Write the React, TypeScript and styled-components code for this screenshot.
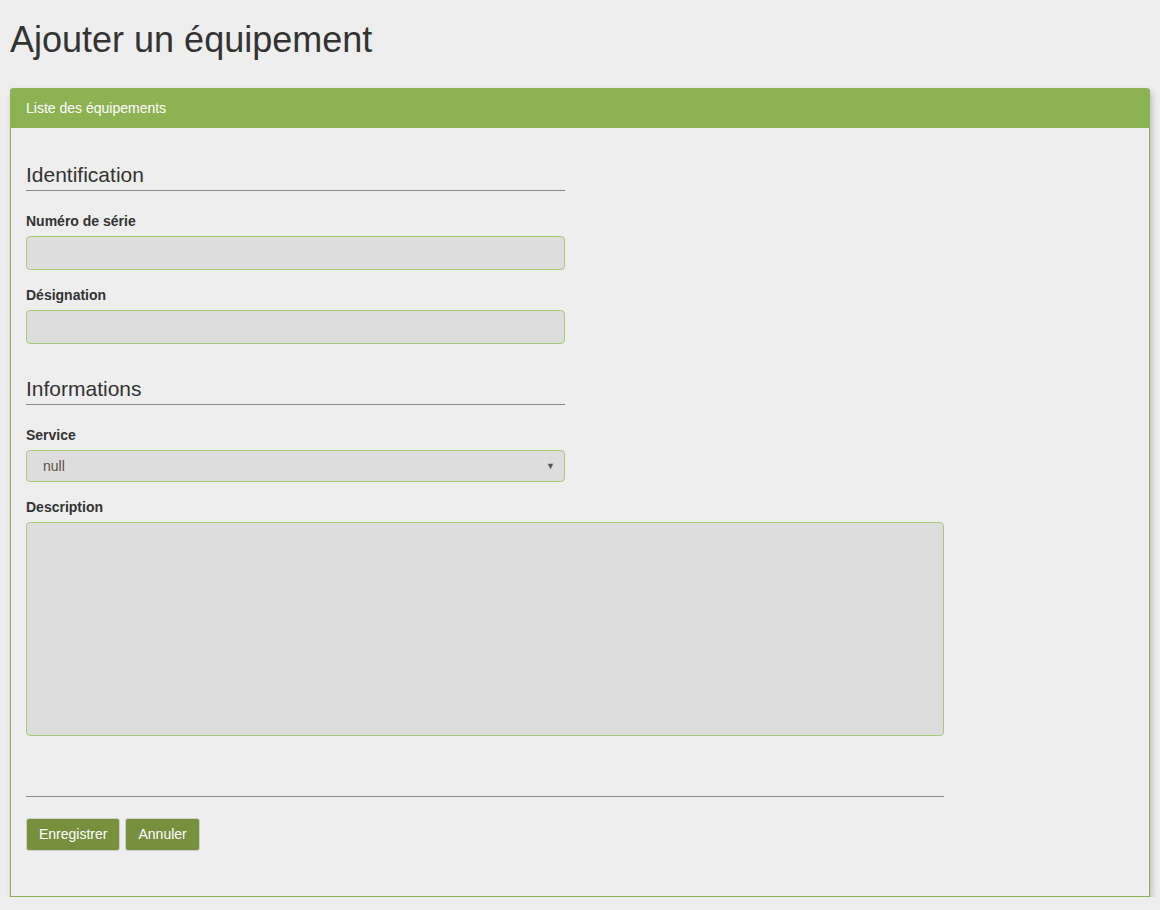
import { FC } from "react";
import styled, { createGlobalStyle } from "styled-components";

const GlobalStyle = createGlobalStyle`
  html, body {
    margin: 0;
    padding: 0;
    background: #eeeeee;
  }
  body {
    font-family: "Liberation Sans", Arial, Helvetica, sans-serif;
    font-size: 14px;
    line-height: 1.42857;
    color: #333333;
  }
  * {
    box-sizing: border-box;
  }
`;

const Page = styled.div`
  padding: 0 10px;
`;

const Title = styled.h1`
  margin: 0;
  padding: 20px 0 28px;
  font-size: 36px;
  font-weight: 500;
  line-height: 1.1;
  color: #333333;
`;

const Panel = styled.section`
  background: #eeeeee;
  border: 1px solid #8db254;
  border-top: none;
  border-radius: 4px 4px 0 0;
  box-shadow: 2px 3px 6px rgba(0, 0, 0, 0.22);
`;

const PanelHeading = styled.div`
  background: #8db254;
  color: #ffffff;
  padding: 10px 15px;
  height: 40px;
  border-radius: 4px 4px 0 0;
  margin: 0 -1px;
  padding-left: 16px;
  font-size: 14px;
  line-height: 20px;
`;

const PanelBody = styled.div`
  padding: 32px 15px 45px;
`;

const Fieldset = styled.fieldset<{ $width: number }>`
  border: 0;
  margin: 0;
  padding: 0;
  width: ${(p) => p.$width}px;
  & + & {
    margin-top: 15px;
  }
`;

const Legend = styled.legend`
  display: block;
  width: 100%;
  padding: 0;
  margin: 0 0 20px;
  font-size: 21px;
  line-height: 30px;
  color: #333333;
  border-bottom: 1px solid #888888;
`;

const FormGroup = styled.div`
  margin-bottom: 15px;
`;

const Label = styled.label`
  display: block;
  margin-bottom: 5px;
  font-weight: bold;
  line-height: 20px;
  color: #333333;
`;

const Input = styled.input`
  display: block;
  width: 100%;
  height: 34px;
  padding: 6px 12px;
  font-family: inherit;
  font-size: 14px;
  color: #555555;
  background: #dddddd;
  border: 1px solid #a6cc79;
  border-radius: 4px;
  outline: none;
`;

const SelectWrap = styled.div`
  position: relative;
  &::after {
    content: "▼";
    position: absolute;
    right: 10px;
    top: 11px;
    font-size: 9px;
    line-height: 10px;
    color: #555555;
    pointer-events: none;
  }
`;

const Select = styled.select`
  display: block;
  width: 100%;
  height: 32px;
  padding: 4px 16px;
  font-family: inherit;
  font-size: 14px;
  color: #5a5048;
  background: #dddddd;
  border: 1px solid #a6cc79;
  border-radius: 4px;
  appearance: none;
  outline: none;
`;

const TextArea = styled.textarea`
  display: block;
  width: 918px;
  height: 214px;
  padding: 6px 12px;
  font-family: inherit;
  font-size: 14px;
  background: #dddddd;
  border: 1px solid #a6cc79;
  border-radius: 4px;
  resize: none;
  outline: none;
`;

const Divider = styled.hr`
  width: 918px;
  margin: 60px 0 21px;
  border: 0;
  border-top: 1px solid #888888;
`;

const Actions = styled.div`
  display: flex;
  gap: 5px;
`;

const Button = styled.button`
  height: 33px;
  padding: 0 12px;
  font-family: inherit;
  font-size: 14px;
  color: #ffffff;
  background: #76903e;
  border: 1px solid #cfcfcf;
  border-radius: 3px;
  cursor: pointer;
`;

const App: FC = () => {
  return (
    <>
      <GlobalStyle />
      <Page>
        <Title>Ajouter un équipement</Title>
        <Panel>
          <PanelHeading>Liste des équipements</PanelHeading>
          <PanelBody>
            <Fieldset $width={539}>
              <Legend>Identification</Legend>
              <FormGroup>
                <Label>Numéro de série</Label>
                <Input type="text" />
              </FormGroup>
              <FormGroup>
                <Label>Désignation</Label>
                <Input type="text" />
              </FormGroup>
            </Fieldset>
            <Fieldset $width={539}>
              <Legend>Informations</Legend>
              <FormGroup>
                <Label>Service</Label>
                <SelectWrap>
                  <Select defaultValue="null">
                    <option value="null">null</option>
                  </Select>
                </SelectWrap>
              </FormGroup>
            </Fieldset>
            <FormGroup>
              <Label>Description</Label>
              <TextArea />
            </FormGroup>
            <Divider />
            <Actions>
              <Button type="button">Enregistrer</Button>
              <Button type="button">Annuler</Button>
            </Actions>
          </PanelBody>
        </Panel>
      </Page>
    </>
  );
};

export default App;
